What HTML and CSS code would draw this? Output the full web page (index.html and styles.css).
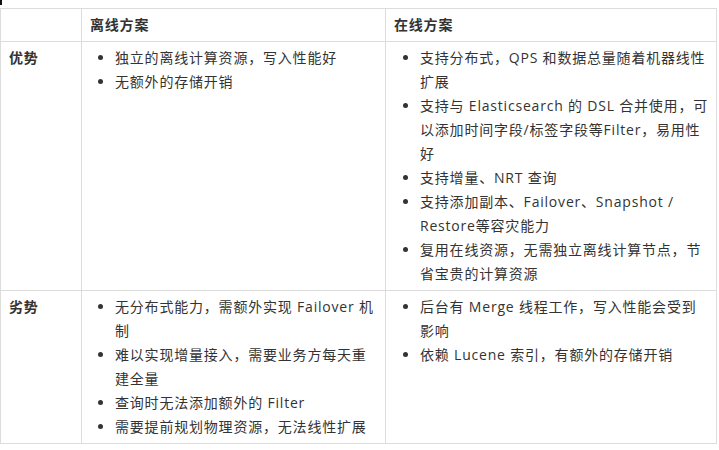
FILE: index.html
```html
<!DOCTYPE html>
<html lang="zh">
<head>
<meta charset="utf-8">
<link rel="stylesheet" href="styles.css">
</head>
<body>
<div class="mark"></div>
<table class="cmp">
  <colgroup>
    <col class="c1">
    <col class="c2">
    <col class="c3">
  </colgroup>
  <thead>
    <tr>
      <th></th>
      <th>离线方案</th>
      <th>在线方案</th>
    </tr>
  </thead>
  <tbody>
    <tr>
      <th class="rowhead">优势</th>
      <td>
        <ul>
          <li>独立的离线计算资源，写入性能好</li>
          <li>无额外的存储开销</li>
        </ul>
      </td>
      <td>
        <ul>
          <li>支持分布式，QPS 和数据总量随着机器线性扩展</li>
          <li>支持与 Elasticsearch 的 DSL 合并使用，可以添加时间字段/标签字段等Filter，易用性好</li>
          <li>支持增量、NRT 查询</li>
          <li>支持添加副本、Failover、Snapshot / Restore等容灾能力</li>
          <li>复用在线资源，无需独立离线计算节点，节省宝贵的计算资源</li>
        </ul>
      </td>
    </tr>
    <tr>
      <th class="rowhead">劣势</th>
      <td>
        <ul>
          <li>无分布式能力，需额外实现 Failover 机制</li>
          <li>难以实现增量接入，需要业务方每天重建全量</li>
          <li>查询时无法添加额外的 Filter</li>
          <li>需要提前规划物理资源，无法线性扩展</li>
        </ul>
      </td>
      <td>
        <ul>
          <li>后台有 Merge 线程工作，写入性能会受到影响</li>
          <li>依赖 Lucene 索引，有额外的存储开销</li>
        </ul>
      </td>
    </tr>
  </tbody>
</table>
</body>
</html>
```
FILE: styles.css
```css
html, body {
  margin: 0;
  padding: 0;
  background: #ffffff;
}
body {
  font-family: "Open Sans", "Noto Sans CJK SC", sans-serif;
  font-size: 14px;
  line-height: 24px;
  color: #333333;
  letter-spacing: 0.8px;
}
.mark {
  width: 2px;
  height: 5px;
  background: #111111;
  margin-bottom: 3px;
}
.cmp {
  border-collapse: collapse;
  table-layout: fixed;
  width: 716px;
}
.c1 { width: 81px; }
.c2 { width: 304px; }
.c3 { width: 331px; }
.cmp th,
.cmp td {
  border: 1px solid #dcdcdc;
  padding: 4px 8px;
  vertical-align: top;
  text-align: left;
}
.cmp th {
  font-weight: bold;
}
.cmp ul {
  margin: 0;
  padding-left: 25px;
}
.cmp td:last-child ul {
  padding-left: 26px;
}
.cmp li {
  margin: 0;
}
```
